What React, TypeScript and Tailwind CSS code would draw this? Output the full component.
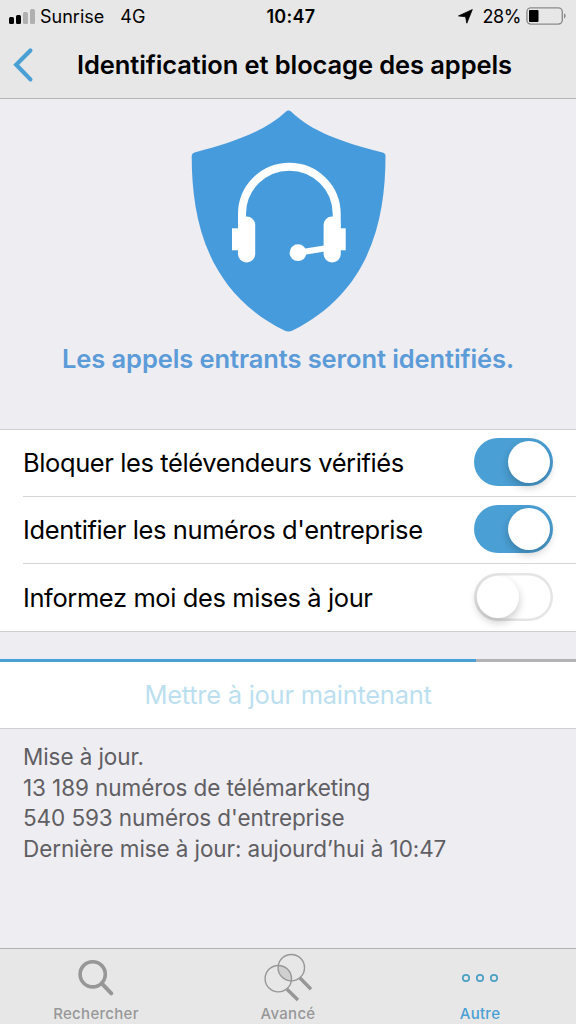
import { useState } from 'react';

const INFO_LINES = [
  'Mise à jour.',
  '13 189 numéros de télémarketing',
  "540 593 numéros d'entreprise",
  'Dernière mise à jour: aujourd’hui à 10:47',
];

const PROGRESS = 82.7;

export default function App() {
  const [blockSpam, setBlockSpam] = useState(true);
  const [identify, setIdentify] = useState(true);
  const [notify, setNotify] = useState(false);

  return (
    <div className="flex h-[1024px] w-[576px] flex-col overflow-hidden bg-[#eeedf2] font-['Inter',sans-serif] text-black">
      <header className="h-[99px] shrink-0 border-b border-[#b5b4b9] bg-[#e7e7e7]">
        <StatusBar />
        <div className="flex h-[66px] items-center">
          <button type="button" aria-label="Retour" className="ml-3 w-[22px]">
            <svg width="22" height="36" viewBox="0 0 22 36" fill="none" stroke="#4a9fd4" strokeWidth="4.2" strokeLinecap="round">
              <path d="M18.4 3.6 4.2 17.8l14.2 14.6" />
            </svg>
          </button>
          <h1 className="ml-[43px] pt-px whitespace-nowrap text-[25.5px] font-semibold tracking-[-0.1px]">
            Identification et blocage des appels
          </h1>
        </div>
      </header>

      <main className="flex-1">
        <section className="flex h-[330px] flex-col items-center pt-[11px]">
          <ShieldLogo />
          <p className="mt-[11px] whitespace-nowrap text-[25.5px] leading-[32px] font-semibold tracking-[-0.1px] text-[#5b9bd8]">
            Les appels entrants seront identifiés.
          </p>
        </section>

        <section className="h-[203px] border-y border-[#cfced4] bg-white pl-[23px]">
          <SettingRow label="Bloquer les télévendeurs vérifiés" checked={blockSpam} onChange={setBlockSpam} />
          <SettingRow label="Identifier les numéros d'entreprise" checked={identify} onChange={setIdentify} />
          <SettingRow label="Informez moi des mises à jour" checked={notify} onChange={setNotify} last />
        </section>

        <section className="mt-[27px] border-b border-[#cfced4] bg-white">
          <div className="h-[3px] bg-[#b3b2b6]">
            <div className="h-full bg-[#4a9fd4]" style={{ width: `${PROGRESS}%` }} />
          </div>
          <button type="button" disabled className="h-[66px] w-full text-[25.5px] tracking-[-0.27px] text-[#bcdff0]">
            Mettre à jour maintenant
          </button>
        </section>

        <div className="px-[23px] pt-[13px] text-[22.5px] leading-[30.7px] tracking-[-0.09px] text-[#5f5e63]">
          {INFO_LINES.map((line) => (
            <p key={line}>{line}</p>
          ))}
        </div>
      </main>

      <nav className="grid h-[76px] shrink-0 grid-cols-3 border-t border-[#b3b2b6] bg-[#e7e7e7] text-[15px] font-medium tracking-[0.3px] text-[#979797]">
        <Tab label="Rechercher">
          <svg width="38" height="38" viewBox="0 0 38 38" fill="none" stroke="#979797">
            <circle cx="15.7" cy="15.3" r="12.6" strokeWidth="3.6" />
            <path d="m24.7 24.3 9.6 10" strokeWidth="4" strokeLinecap="round" />
          </svg>
        </Tab>
        <Tab label="Avancé">
          <svg width="50" height="50" viewBox="0 0 50 50" fill="none" stroke="#979797">
            <path d="M15.3 12.5A13.2 13.2 0 0 1 28.3 27.9 13.2 13.2 0 0 1 15.3 12.5Z" fill="#d0d0d0" stroke="none" />
            <circle cx="28.3" cy="14.7" r="13.2" strokeWidth="1.4" />
            <circle cx="15.3" cy="25.7" r="13.2" strokeWidth="1.4" />
            <path d="m37 25 11 11.2M24 36.2 35 47" strokeWidth="3.4" />
          </svg>
        </Tab>
        <Tab label="Autre" active>
          <svg width="38" height="10" viewBox="0 0 38 10" fill="none" stroke="#4a9fc4" strokeWidth="1.7">
            <circle cx="5" cy="5" r="3.2" />
            <circle cx="19" cy="5" r="3.2" />
            <circle cx="33" cy="5" r="3.2" />
          </svg>
        </Tab>
      </nav>
    </div>
  );
}

function StatusBar() {
  return (
    <div className="grid h-8 grid-cols-3 items-center text-[18px]">
      <div className="flex items-center whitespace-nowrap pl-[9px]">
        <div className="flex items-end gap-[2px]">
          <span className="h-[7px] w-[5px] rounded-[1.5px] bg-black" />
          <span className="h-[9px] w-[5px] rounded-[1.5px] bg-black" />
          <span className="h-[12px] w-[5px] rounded-[1.5px] bg-[#b0b0b0]" />
          <span className="h-[15px] w-[5px] rounded-[1.5px] bg-[#b0b0b0]" />
        </div>
        <span className="ml-[5px]">Sunrise</span>
        <span className="ml-[16px]">4G</span>
      </div>
      <span className="pl-[6px] text-center font-semibold tracking-[0.3px]">10:47</span>
      <div className="flex items-center justify-end pr-[8px]">
        <svg width="15" height="15" viewBox="0 0 15 15" className="mr-[9px]">
          <path d="M14.3.6 8.8 14.2 7.6 7.8.5 6.9Z" stroke="#000" strokeWidth=".8" strokeLinejoin="round" />
        </svg>
        <span className="tracking-[-0.4px]">28%</span>
        <svg width="42" height="18" viewBox="0 0 42 18" className="ml-[5px]">
          <rect x=".9" y=".9" width="35.4" height="16.2" rx="4" fill="none" stroke="#8c8c8c" strokeWidth="1.4" />
          <rect x="3" y="3" width="9.5" height="12" rx="1" />
          <path d="M38 6.3a3 3 0 0 1 0 5.4Z" fill="#8c8c8c" />
        </svg>
      </div>
    </div>
  );
}

function ShieldLogo() {
  return (
    <svg width="220" height="222" viewBox="0 0 220 222" className="shrink-0">
      <path
        d="M107.8 1.7Q110.5-.5 113.3 1.7C133 21 163 32 204.5 42.4Q207.5 43.3 207.5 46C207.5 110 192 182 114.5 220.6Q110.5 222.6 106.5 220.6C29 182 13.7 110 13.7 46Q13.7 43.3 16.5 42.4C57 32 87 21 107.8 1.7Z"
        fill="#469bdd"
      />
      <g fill="#fff">
        <path d="M64 116v-12a47.35 47.35 0 0 1 94.7 0v12" fill="none" stroke="#fff" strokeWidth="8" />
        <rect x="60" y="106.5" width="17.2" height="46" rx="8.5" />
        <rect x="145.6" y="106.5" width="17.2" height="46" rx="8.5" />
        <rect x="54" y="118.3" width="8" height="22" />
        <rect x="160" y="118.3" width="7.7" height="22" />
        <circle cx="120" cy="142.7" r="8.4" />
        <path d="m120 142.7 28-4.4" stroke="#fff" strokeWidth="6" />
      </g>
    </svg>
  );
}

type SettingRowProps = {
  label: string;
  checked: boolean;
  onChange: (value: boolean) => void;
  last?: boolean;
};

function SettingRow({ label, checked, onChange, last }: SettingRowProps) {
  return (
    <div className={`flex h-[67px] items-center justify-between pr-[23px] ${last ? '' : 'border-b border-[#d4d3d8]'}`}>
      <span className="pt-px whitespace-nowrap text-[25.5px] tracking-[-0.4px]">{label}</span>
      <button
        type="button"
        role="switch"
        aria-checked={checked}
        aria-label={label}
        onClick={() => onChange(!checked)}
        className={`mb-[2px] flex h-12 w-[79px] items-center rounded-full px-[3px] ${
          checked ? 'justify-end bg-[#4a9fd4]' : 'bg-white ring-[2.5px] ring-[#e5e5e5] ring-inset'
        }`}
      >
        <span className="size-[42px] rounded-full bg-white shadow-[0_4px_8px_rgba(0,0,0,0.22)]" />
      </button>
    </div>
  );
}

function Tab({ label, active, children }: { label: string; active?: boolean; children: React.ReactNode }) {
  return (
    <button type="button" className={`flex flex-col items-center ${active ? 'text-[#4a9fd4]' : ''}`}>
      <span className="flex h-[55px] items-center justify-center pt-[3px]">{children}</span>
      <span className="pt-px leading-[18px]">{label}</span>
    </button>
  );
}
